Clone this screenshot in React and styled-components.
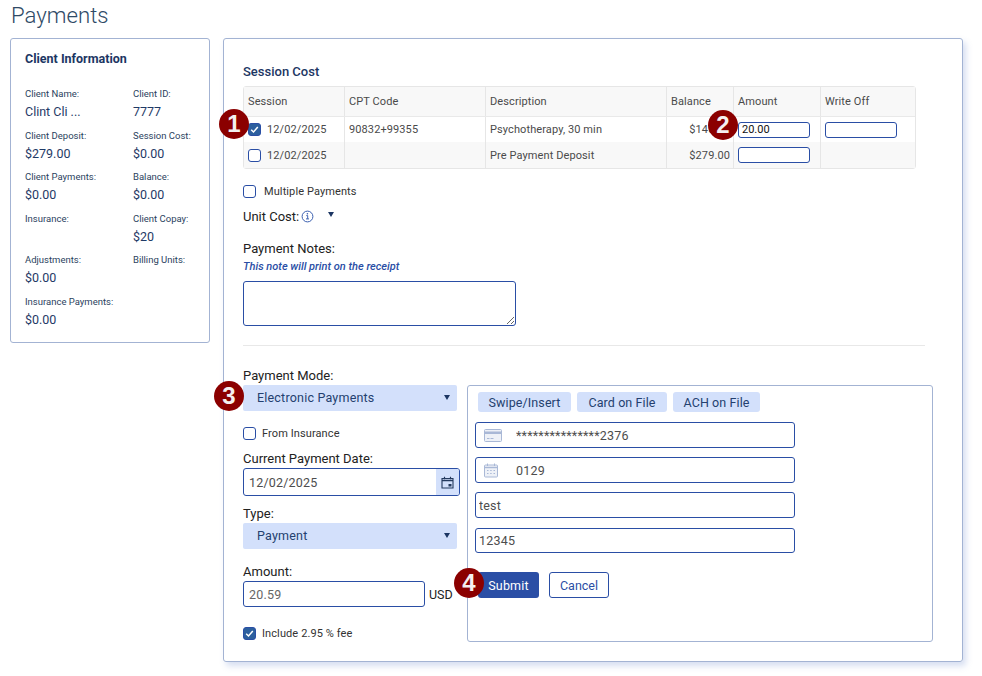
import React from 'react';
import styled, { createGlobalStyle } from 'styled-components';

const Global = createGlobalStyle`
  html, body { margin: 0; padding: 0; background: #fff; }
  * { box-sizing: border-box; }
  body { font-family: Roboto, "Liberation Sans", sans-serif; color: #333; }
`;

const Page = styled.div`
  width: 982px;
  height: 676px;
  overflow: hidden;
  padding: 0 10px;
`;
const Title = styled.h1`
  margin: 0 0 0 1px;
  height: 38px;
  font-size: 22.2px;
  line-height: 31px;
  font-weight: 300;
  color: #2f4a66;
`;
const Columns = styled.div`
  display: flex;
  align-items: flex-start;
  gap: 13px;
`;
const InfoCard = styled.aside`
  width: 200px;
  height: 305px;
  border: 1px solid #a3b3d3;
  border-radius: 3px;
  padding: 12px 14px;
`;
const InfoTitle = styled.h2`
  margin: 0 0 21px;
  font-size: 12.5px;
  line-height: 15px;
  font-weight: 700;
  color: #1c3663;
`;
const InfoGrid = styled.div`
  display: grid;
  grid-template-columns: 108px 1fr;
`;
const InfoItem = styled.div`
  height: 41.6px;
`;
const InfoLabel = styled.div`
  font-size: 9.5px;
  line-height: 14px;
  color: #2b3f5e;
`;
const InfoValue = styled.div`
  margin-top: 2px;
  font-size: 12.5px;
  line-height: 18px;
  color: #1f3a66;
`;
const MainCard = styled.main`
  position: relative;
  width: 740px;
  height: 624px;
  border: 1px solid #a3b3d3;
  border-radius: 3px;
  padding: 25px 19px 0;
  box-shadow: 3px 4px 6px rgba(120, 145, 210, 0.3);
`;
const Heading = styled.h3`
  margin: 0 0 7px;
  font-size: 13px;
  line-height: 15px;
  font-weight: 500;
  color: #1c3663;
`;
const Table = styled.div`
  width: 673px;
  border: 1px solid #e6e6e6;
  border-radius: 3px;
  font-size: 11px;
  color: #4a4a4a;
`;
const Row = styled.div`
  display: grid;
  grid-template-columns: 101px 141px 181px 67px 87px 1fr;
  height: ${p => p.$h}px;
  background: ${p => p.$shade ? '#f8f8f8' : '#fff'};
  border-bottom: ${p => p.$line ? '1px solid #e9e9e9' : 'none'};
`;
const Cell = styled.div`
  display: flex;
  align-items: center;
  justify-content: ${p => p.$right ? 'flex-end' : 'flex-start'};
  gap: 6px;
  padding: 0 ${p => p.$right ? '3px' : '4px'} 0 ${p => p.$right ? '0' : '4px'};
  border-right: ${p => p.$end ? 'none' : '1px solid #e6e6e6'};
  letter-spacing: 0.1px;
`;
const Box = styled.span`
  flex: none;
  display: inline-flex;
  align-items: center;
  justify-content: center;
  width: 13px;
  height: 13px;
  border: 1px solid #2a4ea5;
  border-radius: 3px;
  background: ${p => p.$on ? '#2c5f9e' : '#fff'};
`;
const CellInput = styled.input`
  width: 72px;
  height: 16px;
  padding: 0 3px;
  border: 1px solid #2a4ea5;
  border-radius: 3px;
  font: 11px Roboto, sans-serif;
  color: #111;
  outline: none;
  background: #fff;
`;
const CheckRow = styled.label`
  display: flex;
  align-items: center;
  gap: ${p => p.$gap || 8}px;
  height: 14px;
  margin-top: ${p => p.$mt}px;
  font-size: 11px;
  letter-spacing: 0.1px;
  color: #333;
`;
const UnitRow = styled.div`
  display: flex;
  align-items: center;
  height: 16px;
  margin-top: 10px;
  font-size: 13px;
  color: #222;
  svg { display: block; }
`;
const Caret = styled.span`
  display: block;
  width: 0;
  height: 0;
  margin-left: ${p => p.$ml || 0}px;
  margin-top: ${p => p.$mt || 0}px;
  border-left: 3.5px solid transparent;
  border-right: 3.5px solid transparent;
  border-top: 5px solid #1c3663;
`;
const Label = styled.div`
  margin-top: ${p => p.$mt || 0}px;
  font-size: 13px;
  line-height: 16px;
  color: #222;
`;
const Hint = styled.div`
  margin-top: 3px;
  font-size: 11px;
  line-height: 14px;
  font-style: italic;
  font-weight: 500;
  color: #2a4ea5;
`;
const Notes = styled.textarea`
  display: block;
  width: 273px;
  height: 45px;
  margin-top: 7px;
  border: 1px solid #2a4ea5;
  border-radius: 3px;
  outline: none;
`;
const Divider = styled.hr`
  width: 682px;
  margin: 19px 0 22px;
  border: none;
  border-top: 1px solid #e8e8e8;
`;
const PaySection = styled.div`
  display: flex;
  align-items: flex-start;
  gap: 7px;
`;
const FormCol = styled.div`
  width: 217px;
`;
const Select = styled.div`
  display: flex;
  align-items: center;
  justify-content: space-between;
  width: 214px;
  height: 26px;
  margin-top: 1px;
  padding: 0 7px 2px 14px;
  background: #d3e0fb;
  border-radius: 2px;
  font-size: 12.5px;
  letter-spacing: 0.2px;
  color: #24406f;
`;
const DateField = styled.div`
  display: flex;
  height: 28px;
  margin-top: 1px;
  border: 1px solid #2a4ea5;
  border-radius: 3px;
  overflow: hidden;
`;
const FieldInput = styled.input`
  flex: 1;
  min-width: 0;
  width: 100%;
  height: 100%;
  padding: 0 5px;
  border: none;
  outline: none;
  background: transparent;
  font: 12.5px Roboto, sans-serif;
  letter-spacing: 0.2px;
  color: #4d4d4d;
`;
const AmountInput = styled(FieldInput)`
  color: #666;
`;
const DateButton = styled.span`
  flex: none;
  display: flex;
  align-items: center;
  justify-content: center;
  width: 23px;
  background: #d3e0fb;
`;
const AmountRow = styled.div`
  display: flex;
  align-items: center;
  gap: 4px;
  margin-top: 1px;
  font-size: 12.5px;
  color: #222;
`;
const AmountField = styled.div`
  width: 182px;
  height: 26px;
  border: 1px solid #2a4ea5;
  border-radius: 3px;
`;
const CardBox = styled.section`
  width: 466px;
  height: 257px;
  margin-top: 17px;
  padding: 6px 7px;
  border: 1px solid #a3b3d3;
  border-radius: 3px;
`;
const Tabs = styled.div`
  display: flex;
  gap: 6px;
  padding-left: 3px;
  margin-bottom: 10px;
`;
const Tab = styled.button`
  height: 20px;
  width: ${p => p.$w}px;
  padding: 0;
  border: none;
  border-radius: 3px;
  background: #d3e0fb;
  font: 12.5px Roboto, sans-serif;
  letter-spacing: 0.1px;
  color: #24406f;
`;
const CardField = styled.div`
  display: flex;
  align-items: center;
  width: 320px;
  height: ${p => p.$h || 26}px;
  margin-bottom: ${p => p.$mb || 9}px;
  border: 1px solid #2a4ea5;
  border-radius: 3px;
`;
const FieldIcon = styled.span`
  flex: none;
  display: flex;
  justify-content: flex-start;
  width: 35px;
  padding-left: 8px;
`;
const CardInput = styled(FieldInput)`
  padding: 0 ${p => p.$icon ? '5px' : '3px'};
`;
const Actions = styled.div`
  display: flex;
  gap: 10px;
  margin: 19px 0 0 3px;
`;
const Submit = styled.button`
  width: 61px;
  height: 26px;
  padding: 0;
  border: none;
  border-radius: 3px;
  background: #2a4ea5;
  color: #fff;
  font: 12.5px Roboto, sans-serif;
  letter-spacing: 0.2px;
`;
const Cancel = styled.button`
  width: 60px;
  height: 26px;
  padding: 0;
  border: 1px solid #2a4ea5;
  border-radius: 3px;
  background: #fff;
  color: #2a4ea5;
  font: 12.5px Roboto, sans-serif;
`;
const Badge = styled.span`
  position: absolute;
  left: ${p => p.$x}px;
  top: ${p => p.$y}px;
  display: flex;
  align-items: center;
  justify-content: center;
  width: 30px;
  height: 30px;
  border-radius: 50%;
  background: #8b0000;
  color: #f4f0f0;
  font: 700 24px "Liberation Sans", Arial, sans-serif;
`;

const Check = () => (
  <svg width="9" height="9" viewBox="0 0 9 9" fill="none">
    <path d="M1.2 4.8 3.5 7 7.8 2" stroke="#fff" strokeWidth="1.5" />
  </svg>
);
const Info = () => (
  <svg width="13" height="13" viewBox="0 0 13 13" fill="none" style={{ marginLeft: 2 }}>
    <circle cx="6.5" cy="6.5" r="5.4" stroke="#3a5fb0" />
    <path d="M5.3 5.6h1.4v3.2M5 8.9h3" stroke="#3a5fb0" />
    <circle cx="6.4" cy="3.7" r="0.8" fill="#3a5fb0" />
  </svg>
);
const CalendarSolid = () => (
  <svg width="13" height="13" viewBox="0 0 13 13" fill="none">
    <path d="M1 2.5h11v9.5H1z" stroke="#243a5e" strokeWidth="1.1" />
    <path d="M1 4.5h11" stroke="#243a5e" strokeWidth="1.4" />
    <path d="M3.5 0.8v2.4M9.5 0.8v2.4" stroke="#243a5e" strokeWidth="1.2" />
    <rect x="7.5" y="8" width="3" height="2.5" fill="#243a5e" />
  </svg>
);
const CardIcon = () => (
  <svg width="18" height="13" viewBox="0 0 18 13">
    <rect x="0.5" y="0.5" width="17" height="12" rx="1" fill="#eef1f7" stroke="#a9b8d6" />
    <rect x="1" y="2.5" width="16" height="2.5" fill="#a9b8d6" />
    <path d="M3 9.5h2.5M6.5 9.5h3" stroke="#a9b8d6" />
  </svg>
);
const CalendarIcon = () => (
  <svg width="14" height="15" viewBox="0 0 14 15" fill="none">
    <rect x="0.5" y="2" width="13" height="12" rx="1" fill="#eef1f7" stroke="#a9b8d6" />
    <path d="M1 4.5h12" stroke="#a9b8d6" strokeWidth="1.4" />
    <path d="M3.5 0.5v2.5M10.5 0.5v2.5" stroke="#a9b8d6" />
    <path d="M3 7.5h1.5M6.2 7.5h1.5M9.5 7.5H11M3 10.5h1.5M6.2 10.5h1.5M9.5 10.5H11" stroke="#a9b8d6" />
  </svg>
);

const clientInfo = [
  ['Client Name:', 'Clint Cli ...'],
  ['Client ID:', '7777'],
  ['Client Deposit:', '$279.00'],
  ['Session Cost:', '$0.00'],
  ['Client Payments:', '$0.00'],
  ['Balance:', '$0.00'],
  ['Insurance:', ''],
  ['Client Copay:', '$20'],
  ['Adjustments:', '$0.00'],
  ['Billing Units:', ''],
  ['Insurance Payments:', '$0.00'],
];

export default function App() {
  return (
    <Page>
      <Global />
      <Title>Payments</Title>
      <Columns>
        <InfoCard>
          <InfoTitle>Client Information</InfoTitle>
          <InfoGrid>
            {clientInfo.map(([label, value]) => (
              <InfoItem key={label}>
                <InfoLabel>{label}</InfoLabel>
                {value && <InfoValue>{value}</InfoValue>}
              </InfoItem>
            ))}
          </InfoGrid>
        </InfoCard>

        <MainCard>
          <Heading>Session Cost</Heading>
          <Table>
            <Row $h={30} $shade $line>
              <Cell>Session</Cell>
              <Cell>CPT Code</Cell>
              <Cell>Description</Cell>
              <Cell>Balance</Cell>
              <Cell>Amount</Cell>
              <Cell $end>Write Off</Cell>
            </Row>
            <Row $h={25}>
              <Cell><Box $on><Check /></Box>12/02/2025</Cell>
              <Cell>90832+99355</Cell>
              <Cell>Psychotherapy, 30 min</Cell>
              <Cell $right>$140.00</Cell>
              <Cell><CellInput defaultValue="20.00" /></Cell>
              <Cell $end><CellInput /></Cell>
            </Row>
            <Row $h={26} $shade>
              <Cell><Box />12/02/2025</Cell>
              <Cell />
              <Cell>Pre Payment Deposit</Cell>
              <Cell $right>$279.00</Cell>
              <Cell><CellInput /></Cell>
              <Cell $end />
            </Row>
          </Table>

          <CheckRow $mt={15}><Box />Multiple Payments</CheckRow>
          <UnitRow>Unit Cost: <Info /><Caret $ml={14} $mt={-4} /></UnitRow>
          <Label $mt={17}>Payment Notes:</Label>
          <Hint>This note will print on the receipt</Hint>
          <Notes />
          <Divider />

          <PaySection>
            <FormCol>
              <Label>Payment Mode:</Label>
              <Select>Electronic Payments<Caret /></Select>
              <CheckRow $mt={15} $gap={6}><Box />From Insurance</CheckRow>
              <Label $mt={11}>Current Payment Date:</Label>
              <DateField>
                <FieldInput defaultValue="12/02/2025" />
                <DateButton><CalendarSolid /></DateButton>
              </DateField>
              <Label $mt={10}>Type:</Label>
              <Select>Payment<Caret /></Select>
              <Label $mt={15}>Amount:</Label>
              <AmountRow>
                <AmountField><AmountInput defaultValue="20.59" /></AmountField>
                USD
              </AmountRow>
              <CheckRow $mt={19} $gap={6}><Box $on><Check /></Box>Include 2.95 % fee</CheckRow>
            </FormCol>
            <CardBox>
              <Tabs>
                <Tab $w={93}>Swipe/Insert</Tab>
                <Tab $w={90}>Card on File</Tab>
                <Tab $w={87}>ACH on File</Tab>
              </Tabs>
              <CardField>
                <FieldIcon><CardIcon /></FieldIcon>
                <CardInput $icon defaultValue="***************2376" />
              </CardField>
              <CardField>
                <FieldIcon><CalendarIcon /></FieldIcon>
                <CardInput $icon defaultValue="0129" />
              </CardField>
              <CardField $mb={10}><CardInput defaultValue="test" /></CardField>
              <CardField $h={25}><CardInput defaultValue="12345" /></CardField>
              <Actions>
                <Submit>Submit</Submit>
                <Cancel>Cancel</Cancel>
              </Actions>
            </CardBox>
          </PaySection>

          <Badge $x={-5} $y={70}>1</Badge>
          <Badge $x={484} $y={71}>2</Badge>
          <Badge $x={-10} $y={342}>3</Badge>
          <Badge $x={230} $y={529}>4</Badge>
        </MainCard>
      </Columns>
    </Page>
  );
}
